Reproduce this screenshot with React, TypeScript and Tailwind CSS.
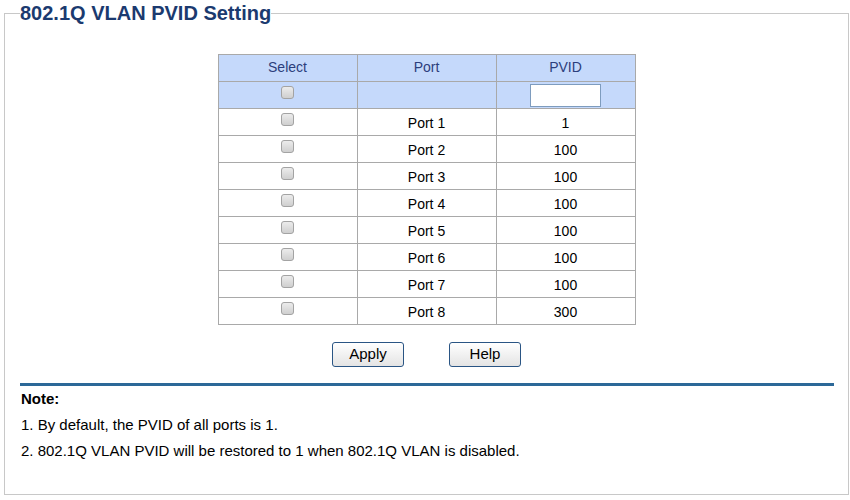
import React from "react";

const ports = [
  { name: "Port 1", pvid: "1" },
  { name: "Port 2", pvid: "100" },
  { name: "Port 3", pvid: "100" },
  { name: "Port 4", pvid: "100" },
  { name: "Port 5", pvid: "100" },
  { name: "Port 6", pvid: "100" },
  { name: "Port 7", pvid: "100" },
  { name: "Port 8", pvid: "300" },
];

function Check() {
  return (
    <span className="inline-block w-[13px] h-[13px] rounded-[3px] border border-[#a3a3a3] bg-gradient-to-b from-[#ececec] to-[#cfcfcf]" />
  );
}

export default function App() {
  return (
    <div className="w-[850px] h-[500px] bg-white font-['Liberation_Sans',Arial,sans-serif] text-[14px] text-black pl-[4px] pt-[3px]">
      <fieldset className="w-[845px] h-[492px] border border-[#c8c8c8] px-[15px]">
        <legend className="text-[20px] leading-[20px] font-bold text-[#1b3a6f]">802.1Q VLAN PVID Setting</legend>

        <table className="mx-auto mt-[31px] w-[418px] border-collapse text-center">
          <thead>
            <tr className="h-[27px] bg-[#c5d9fb] text-[#2c3e7c]">
              <th className="w-[139px] border border-[#a9a9a9] font-normal pb-[1px]">Select</th>
              <th className="w-[139px] border border-[#a9a9a9] font-normal pb-[1px]">Port</th>
              <th className="w-[139px] border border-[#a9a9a9] font-normal pb-[1px]">PVID</th>
            </tr>
          </thead>
          <tbody>
            <tr className="h-[27px] bg-[#c5d9fb]">
              <td className="border border-[#a9a9a9] align-top pt-[2px]">
                <Check />
              </td>
              <td className="border border-[#a9a9a9]"></td>
              <td className="border border-[#a9a9a9]">
                <div className="flex justify-center pt-[1px]">
                  <input className="w-[71px] h-[23px] border border-[#7e9cbe] bg-white outline-none" />
                </div>
              </td>
            </tr>
            {ports.map((p) => (
              <tr key={p.name} className="h-[27px]">
                <td className="border border-[#a9a9a9] align-top pt-[2px]">
                  <Check />
                </td>
                <td className="border border-[#a9a9a9] pt-[2px]">{p.name}</td>
                <td className="border border-[#a9a9a9] pt-[2px]">{p.pvid}</td>
              </tr>
            ))}
          </tbody>
        </table>

        <div className="flex justify-center gap-[45px] mt-[17px]">
          <button className="w-[72px] h-[25px] rounded-[3px] border border-[#2a5584] bg-gradient-to-b from-white to-[#e4e4e4] text-[15px] text-black">
            Apply
          </button>
          <button className="w-[72px] h-[25px] rounded-[3px] border border-[#2a5584] bg-gradient-to-b from-white to-[#e4e4e4] text-[15px] text-black">
            Help
          </button>
        </div>

        <div className="mt-[16px] h-[3px] bg-[#2c6898] mr-[-1px]" />
        <div className="pl-[1px] text-[15px]">
          <p className="font-bold mt-[2px] leading-[22px]">Note:</p>
          <p className="mt-[4px] leading-[22px]">1. By default, the PVID of all ports is 1.</p>
          <p className="mt-[4px] leading-[22px]">2. 802.1Q VLAN PVID will be restored to 1 when 802.1Q VLAN is disabled.</p>
        </div>
      </fieldset>
    </div>
  );
}
